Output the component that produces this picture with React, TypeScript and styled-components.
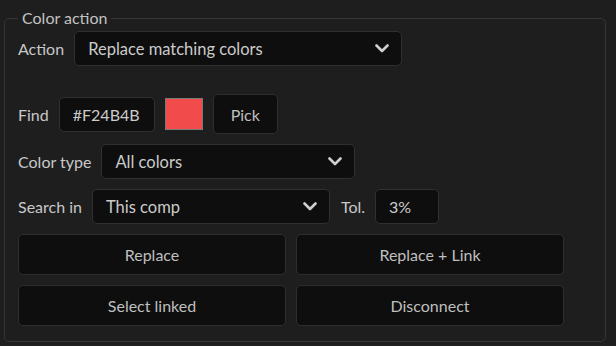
import React from "react";
import styled, { createGlobalStyle } from "styled-components";

const GlobalStyle = createGlobalStyle`
  html, body {
    margin: 0;
    padding: 0;
    background: #1e1e1e;
  }
  body {
    font-family: Lato, "Noto Sans", sans-serif;
    color: #c6c6c6;
  }
`;

const Page = styled.div`
  padding: 9px 10px 5px 4px;
  width: 616px;
  height: 346px;
  box-sizing: border-box;
`;

const Panel = styled.fieldset`
  margin: 0;
  border: 1px solid #353535;
  border-radius: 5px;
  padding: 4px 13px 15px 13px;
  display: flex;
  flex-direction: column;
  gap: 10px;
  legend {
    padding: 0 4px;
    margin-left: 0;
    font-size: 16px;
    color: #c2c2c2;
    line-height: 18px;
  }
`;

const Row = styled.div<{ $spaceAfter?: number }>`
  display: flex;
  align-items: center;
  gap: 10px;
  margin-bottom: ${(p) => p.$spaceAfter ?? 0}px;
`;

const Label = styled.span`
  font-size: 16px;
  color: #c8c8c8;
  white-space: nowrap;
`;

const Dropdown = styled.button<{ $w: number }>`
  width: ${(p) => p.$w}px;
  height: 35px;
  box-sizing: border-box;
  background: #0e0e0e;
  border: 1px solid #303030;
  border-radius: 5px;
  color: #cbcbcb;
  font-family: inherit;
  font-size: 16.5px;
  display: flex;
  align-items: center;
  justify-content: space-between;
  padding: 0 12px 0 13px;
`;

const TextField = styled.div<{ $w: number }>`
  width: ${(p) => p.$w}px;
  height: 35px;
  box-sizing: border-box;
  background: #0e0e0e;
  border: 1px solid #303030;
  border-radius: 5px;
  color: #cbcbcb;
  font-size: 16px;
  display: flex;
  align-items: center;
  padding: 0 13px;
`;

const Swatch = styled.div<{ $color: string }>`
  width: 38px;
  height: 32px;
  box-sizing: border-box;
  background: ${(p) => p.$color};
  border: 1px solid #7a7a7a;
`;

const Button = styled.button<{ $w?: number }>`
  ${(p) => (p.$w ? `width: ${p.$w}px;` : "")}
  height: 41px;
  box-sizing: border-box;
  background: #0e0e0e;
  border: 1px solid #2e2e2e;
  border-radius: 5px;
  color: #bfbfbf;
  font-family: inherit;
  font-size: 16px;
  padding: 0;
`;

const PickButton = styled(Button)`
  height: 40px;
`;

const ButtonGrid = styled.div`
  display: grid;
  grid-template-columns: 268px 268px;
  column-gap: 10px;
  row-gap: 10px;
`;

const Tol = styled(Label)`
  margin-left: 1px;
`;

const Chevron = () => (
  <svg width="14" height="9" viewBox="0 0 14 9">
    <polyline
      points="1.5,1.5 7,7 12.5,1.5"
      fill="none"
      stroke="#cfcfcf"
      strokeWidth="2.6"
      strokeLinecap="round"
      strokeLinejoin="round"
    />
  </svg>
);

export default function App() {
  return (
    <>
      <GlobalStyle />
      <Page>
        <Panel>
          <legend>Color action</legend>
          <Row $spaceAfter={18}>
            <Label>Action</Label>
            <Dropdown $w={328}>
              <span>Replace matching colors</span>
              <Chevron />
            </Dropdown>
          </Row>
          <Row>
            <Label>Find</Label>
            <TextField $w={96}>#F24B4B</TextField>
            <Swatch $color="#f24b4b" />
            <PickButton $w={65}>Pick</PickButton>
          </Row>
          <Row>
            <Label>Color type</Label>
            <Dropdown $w={254}>
              <span>All colors</span>
              <Chevron />
            </Dropdown>
          </Row>
          <Row>
            <Label>Search in</Label>
            <Dropdown $w={238}>
              <span>This comp</span>
              <Chevron />
            </Dropdown>
            <Tol>Tol.</Tol>
            <TextField $w={64}>3%</TextField>
          </Row>
          <ButtonGrid>
            <Button>Replace</Button>
            <Button>Replace + Link</Button>
            <Button>Select linked</Button>
            <Button>Disconnect</Button>
          </ButtonGrid>
        </Panel>
      </Page>
    </>
  );
}
